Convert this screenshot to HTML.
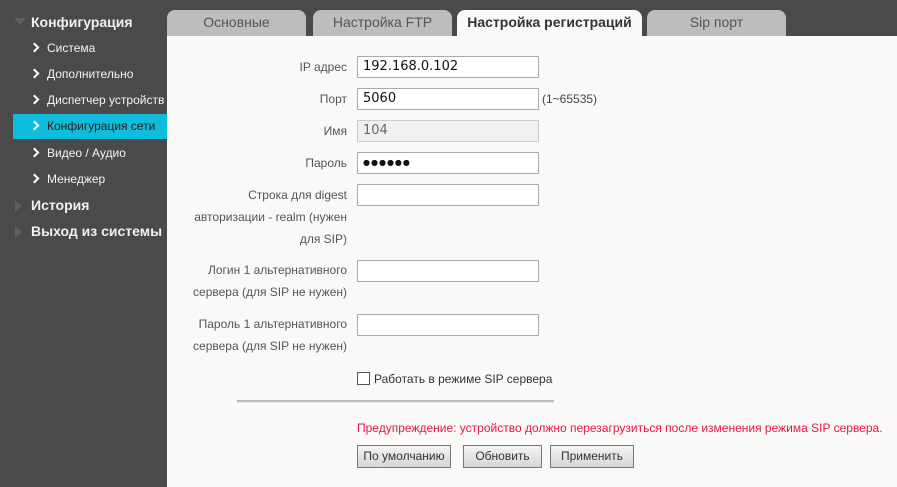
<!DOCTYPE html>
<html><head><meta charset="utf-8"><style>
*{margin:0;padding:0;box-sizing:border-box}
body{width:897px;height:487px;background:#4a4a4a;font-family:"Liberation Sans",Arial,sans-serif;position:relative;overflow:hidden}
.a{position:absolute;white-space:nowrap}
.h{color:#f0f0f0;font-weight:bold;font-size:14px}
.it{color:#f4f4f4;font-size:12px}
.chev{position:absolute;left:31px;width:7px;height:7px;border-right:2px solid #fff;border-top:2px solid #fff;transform:rotate(45deg)}
.tab{position:absolute;top:10px;height:26px;background:#bdbdbd;border-radius:8px 8px 0 0;color:#555;font-size:14px;text-align:center;line-height:24px}
.panel{position:absolute;left:167px;top:36px;width:730px;height:451px;background:#faf9f7}
.lbl{position:absolute;right:550px;text-align:right;color:#555;font-size:12px;line-height:26px;white-space:nowrap}
.ml{line-height:22px}
.inp{position:absolute;left:357px;width:182px;height:22px;border:1px solid #aaa;background:#fff;font-family:"DejaVu Sans",sans-serif;font-size:13px;padding-left:5px;line-height:20px;color:#111}
.btn{position:absolute;top:445px;height:23px;border:1px solid #777;background:linear-gradient(#f4f4f4,#d6d6d6);font-size:12px;color:#333;text-align:center;line-height:21px}
</style></head><body>
<div class="a" style="left:14px;top:18px;width:0;height:0;border-left:6px solid transparent;border-right:6px solid transparent;border-top:7px solid #5e5e5e"></div>
<div class="a h" style="left:31px;top:14px">Конфигурация</div>
<div class="chev" style="top:44px"></div><div class="a it" style="left:47px;top:41px">Система</div>
<div class="chev" style="top:70px"></div><div class="a it" style="left:47px;top:67px">Дополнительно</div>
<div class="chev" style="top:96px"></div><div class="a it" style="left:47px;top:93px">Диспетчер устройств</div>
<div class="a" style="left:13px;top:114px;width:154px;height:25px;background:#0fbcdc"></div>
<div class="chev" style="top:122px"></div><div class="a it" style="left:47px;top:119px;color:#222">Конфигурация сети</div>
<div class="chev" style="top:149px"></div><div class="a it" style="left:47px;top:146px">Видео / Аудио</div>
<div class="chev" style="top:175px"></div><div class="a it" style="left:47px;top:172px">Менеджер</div>
<div class="a" style="left:15px;top:200px;border-top:6px solid transparent;border-bottom:6px solid transparent;border-left:7px solid #5e5e5e"></div>
<div class="a h" style="left:31px;top:197px">История</div>
<div class="a" style="left:15px;top:226px;border-top:6px solid transparent;border-bottom:6px solid transparent;border-left:7px solid #5e5e5e"></div>
<div class="a h" style="left:31px;top:223px">Выход из системы</div>

<div class="tab" style="left:167px;width:139px">Основные</div>
<div class="tab" style="left:313px;width:139px">Настройка FTP</div>
<div class="tab" style="left:457px;width:185px;background:#faf9f7;color:#333;font-weight:bold">Настройка регистраций</div>
<div class="tab" style="left:647px;width:139px">Sip порт</div>
<div class="panel"></div>

<div class="lbl" style="top:54px">IP адрес</div><div class="inp" style="top:56px">192.168.0.102</div>
<div class="lbl" style="top:86px">Порт</div><div class="inp" style="top:88px">5060</div>
<div class="a" style="left:542px;top:92px;font-size:12px;color:#444">(1~65535)</div>
<div class="lbl" style="top:118px">Имя</div><div class="inp" style="top:120px;background:#f0f0f0;border-color:#ccc;color:#666">104</div>
<div class="lbl" style="top:150px">Пароль</div><div class="inp" style="top:152px;font-size:8px;letter-spacing:1px;line-height:20px">●●●●●●</div>
<div class="lbl ml" style="top:184px">Строка для digest<br>авторизации - realm (нужен<br>для SIP)</div><div class="inp" style="top:184px"></div>
<div class="lbl ml" style="top:259px">Логин 1 альтернативного<br>сервера (для SIP не нужен)</div><div class="inp" style="top:260px"></div>
<div class="lbl ml" style="top:313px">Пароль 1 альтернативного<br>сервера (для SIP не нужен)</div><div class="inp" style="top:314px"></div>
<div class="a" style="left:357px;top:372px;width:13px;height:13px;border:1px solid #555;background:#fff"></div>
<div class="a" style="left:374px;top:372px;font-size:12px;color:#333">Работать в режиме SIP сервера</div>
<div class="a" style="left:237px;top:400px;width:317px;height:3px;background:#bbb;border-bottom:1px solid #e6e6e6"></div>
<div class="a" style="left:357px;top:421px;font-size:12px;color:#e8174a">Предупреждение: устройство должно перезагрузиться после изменения режима SIP сервера.</div>
<div class="btn" style="left:357px;width:94px">По умолчанию</div>
<div class="btn" style="left:463px;width:79px">Обновить</div>
<div class="btn" style="left:550px;width:84px">Применить</div>
</body></html>
